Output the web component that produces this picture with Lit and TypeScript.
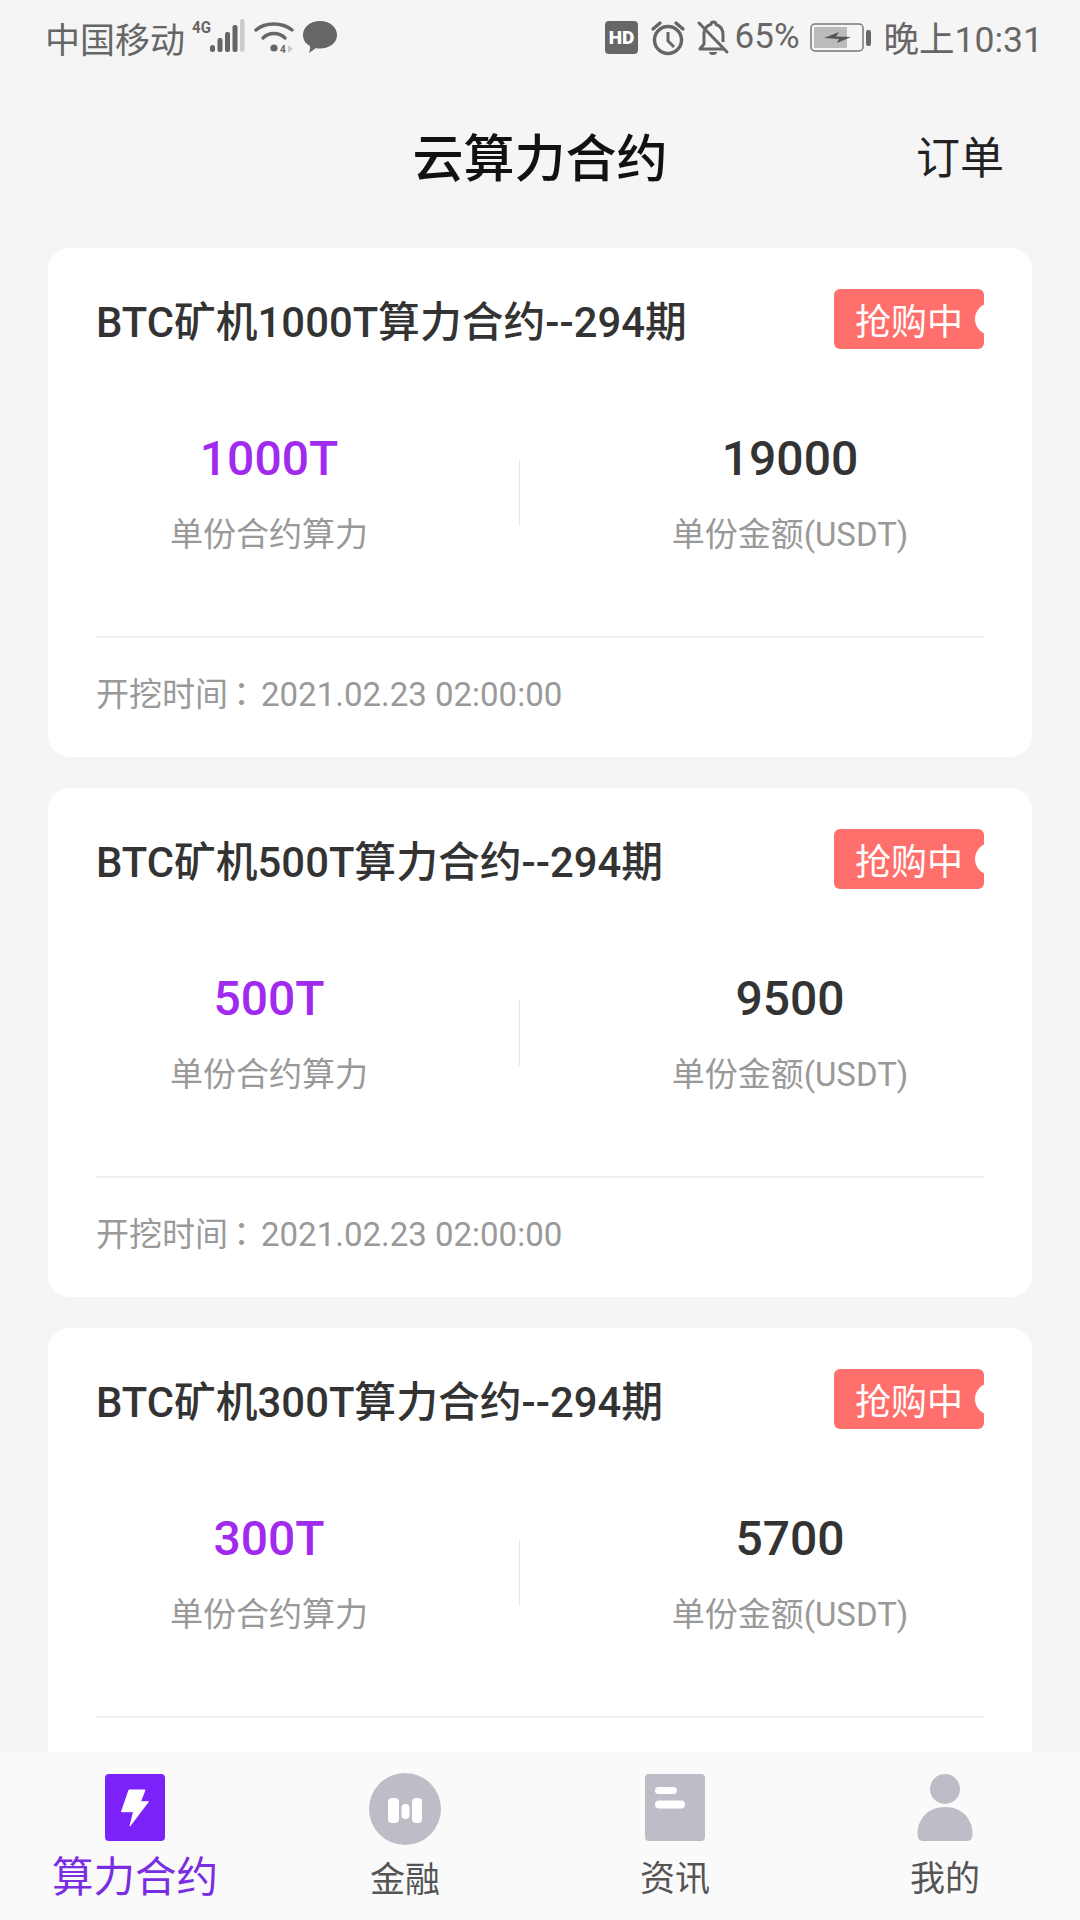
import { LitElement, html, css, nothing } from 'lit';
import { customElement, property } from 'lit/decorators.js';

const FONT = css`Roboto, "Noto Sans CJK SC", sans-serif`;

@customElement('contract-card')
class ContractCard extends LitElement {
  static styles = css`
    :host {
      display: block;
      flex-shrink: 0;
      height: 509px;
      box-sizing: border-box;
      background: #fff;
      border-radius: 22px;
      padding: 41px 48px 0;
    }
    .top {
      display: flex;
      justify-content: space-between;
      height: 60px;
    }
    .name {
      font-size: 41.800px;
      font-weight: 500;
      line-height: 68px;
      color: #333;
    }
    .badge {
      position: relative;
      overflow: hidden;
      width: 150px;
      height: 60px;
      box-sizing: border-box;
      padding-left: 21px;
      border-radius: 6px;
      background: #ff6f6b;
      color: #fff;
      font-size: 36px;
      line-height: 68px;
    }
    .badge::after {
      content: '';
      position: absolute;
      right: -23px;
      top: 14px;
      width: 32px;
      height: 32px;
      border-radius: 50%;
      background: #fff;
    }
    .stats {
      display: grid;
      grid-template-columns: 346px 1fr 388px;
      align-items: center;
      margin-top: 82px;
    }
    .stat {
      display: flex;
      flex-direction: column;
      align-items: center;
    }
    .value {
      font-size: 48px;
      font-weight: 500;
      line-height: 56px;
      color: #333;
    }
    .value.hi {
      color: #a02bee;
    }
    .label {
      margin-top: 28px;
      font-size: 33px;
      line-height: 40px;
      color: #999;
    }
    .sep {
      justify-self: center;
      width: 1px;
      height: 66px;
      background: #e6e6e6;
    }
    .line {
      height: 2px;
      margin-top: 81px;
      background: #eee;
    }
    .foot {
      margin-top: 32px;
      font-size: 33px;
      line-height: 44px;
      color: #999;
    }
    .colon {
      margin: 0 3px 0 -3px;
      font-family: "Noto Sans CJK TC", sans-serif;
    }
  `;

  @property() name = '';
  @property() power = '';
  @property() price = '';
  @property() time = '';

  render() {
    return html`
      <div class="top">
        <div class="name">${this.name}</div>
        <div class="badge">抢购中</div>
      </div>
      <div class="stats">
        <div class="stat">
          <div class="value hi">${this.power}</div>
          <div class="label">单份合约算力</div>
        </div>
        <div class="sep"></div>
        <div class="stat">
          <div class="value">${this.price}</div>
          <div class="label">单份金额(USDT)</div>
        </div>
      </div>
      <div class="line"></div>
      ${this.time
        ? html`<div class="foot">开挖时间<span class="colon">：</span>${this.time}</div>`
        : nothing}
    `;
  }
}

const bars = html`<svg width="58" height="38" viewBox="0 0 58 38">
  <text x="4" y="14" font-family="Roboto" font-size="17" font-weight="700" fill="#666" textLength="19" lengthAdjust="spacingAndGlyphs">4G</text>
  <g fill="#666">
    <rect x="22" y="26" width="5" height="7" rx="2.500"/>
    <rect x="29.500" y="19" width="5" height="14" rx="2"/>
    <rect x="37" y="13" width="5" height="20" rx="2"/>
    <rect x="44.500" y="6" width="5" height="27" rx="2"/>
  </g>
  <rect x="52" y="0" width="4.500" height="33" rx="2" fill="#ccc"/>
</svg>`;

const wifi = html`<svg width="40" height="36" viewBox="0 0 40 36">
  <path d="M2 10C11 2 28 2 38 10" fill="none" stroke="#666" stroke-width="3.400" stroke-linecap="round"/>
  <path d="M9 18C15 12 25 12 31 18" fill="none" stroke="#666" stroke-width="3.400" stroke-linecap="round"/>
  <circle cx="20" cy="28" r="3.600" fill="#666"/>
  <text x="26" y="33" font-family="Roboto" font-size="10" font-weight="700" fill="#666">4</text>
  <path d="M34 25l5 4-5 4z" fill="#ccc"/>
</svg>`;

const bubble = html`<svg width="36" height="36" viewBox="0 0 36 36">
  <path d="M18 1C27.500 1 35 7 35 15C35 23 27.500 28.500 18 28.500C16.500 28.500 15 28.400 14 28L7 33C7 33 8.500 28.500 8 26C3.500 23.500 1 20 1 15C1 7 8.500 1 18 1Z" fill="#666"/>
</svg>`;

const hd = html`<svg width="34" height="34" viewBox="0 0 34 34">
  <rect width="33" height="33" rx="4" fill="#666"/>
  <text x="16.500" y="23" text-anchor="middle" font-family="Roboto" font-size="19" font-weight="900" fill="#fff">HD</text>
</svg>`;

const alarm = html`<svg width="34" height="36" viewBox="0 0 34 36">
  <circle cx="17" cy="20" r="13.500" fill="none" stroke="#666" stroke-width="3.400"/>
  <path d="M17 12v9l6 6" fill="none" stroke="#666" stroke-width="3"/>
  <path d="M2 9L9 3M32 9L25 3" stroke="#666" stroke-width="3.400" stroke-linecap="round"/>
</svg>`;

const bellOff = html`<svg width="32" height="36" viewBox="0 0 32 36">
  <path d="M7 12C8 8 11 5 14 4.500C14 1 19 1 19 4.500C24 6 26 10 26 15V22M7 12V24L3 29H27" fill="none" stroke="#666" stroke-width="3" stroke-linejoin="round"/>
  <path d="M12 32a4 3 0 0 0 8 0z" fill="#666"/>
  <path d="M2 3L30 32" stroke="#666" stroke-width="3" stroke-linecap="round"/>
</svg>`;

const battery = html`<svg width="62" height="30" viewBox="0 0 62 30">
  <rect x="1" y="1" width="52" height="27" rx="4" fill="none" stroke="#777" stroke-width="1.500"/>
  <rect x="4" y="4" width="33" height="21" fill="#bbb"/>
  <path d="M14 15L29 9L26 13.500L41 14L27 20L29 16Z" fill="#555"/>
  <rect x="56" y="7" width="5" height="16" rx="2" fill="#666"/>
</svg>`;

@customElement('app-root')
export class AppRoot extends LitElement {
  static styles = css`
    :host {
      display: flex;
      flex-direction: column;
      width: 1080px;
      height: 1920px;
      overflow: hidden;
      background: #f5f5f5;
      font-family: ${FONT};
    }
    .status {
      display: flex;
      align-items: center;
      justify-content: space-between;
      height: 76px;
      flex-shrink: 0;
      padding: 0 37px 0 45px;
      color: #666;
      font-size: 35px;
    }
    .status div {
      display: flex;
      align-items: center;
    }
    .status svg {
      display: block;
      overflow: visible;
    }
    .carrier {
      margin-right: 3px;
      padding-bottom: 2px;
    }
    .up {
      padding-bottom: 3px;
    }
    .clock {
      font-size: 35.500px;
    }
    .gap-6 {
      margin-left: 6px;
    }
    .gap-8 {
      margin-left: 8px;
    }
    .gap-10 {
      margin-left: 10px;
    }
    .gap-12 {
      margin-left: 12px;
    }
    .header {
      position: relative;
      height: 172px;
      flex-shrink: 0;
      text-align: center;
      font-size: 51px;
      font-weight: 500;
      line-height: 168px;
      color: #111;
    }
    .header span {
      position: absolute;
      right: 76px;
      top: 0;
      font-size: 44px;
      font-weight: 400;
      line-height: 166px;
      color: #222;
    }
    .list {
      flex: 1;
      min-height: 0;
      overflow: hidden;
      display: flex;
      flex-direction: column;
      gap: 31px;
      padding: 0 48px;
    }
    .tabs {
      display: grid;
      grid-template-columns: repeat(4, 1fr);
      height: 168px;
      flex-shrink: 0;
      background: #fafafa;
    }
    .tab {
      display: flex;
      flex-direction: column;
      align-items: center;
      color: #555;
      font-size: 35px;
      line-height: 44px;
    }
    .tab svg {
      display: block;
      margin-top: 22px;
      height: 67px;
    }
    .tab svg.round {
      margin-top: 21px;
      height: 72px;
    }
    .tab.on {
      color: #7a2ee2;
      font-size: 41.500px;
    }
    .tab .txt {
      margin-top: 14px;
    }
    .tab.on .txt {
      margin-top: 15px;
    }
    .tab .txt.sm {
      margin-top: 17px;
    }
  `;

  render() {
    return html`
      <div class="status">
        <div>
          <span class="carrier">中国移动</span>
          ${bars}
          <span class="gap-8">${wifi}</span>
          <span class="gap-8">${bubble}</span>
        </div>
        <div>
          ${hd}
          <span class="gap-12">${alarm}</span>
          <span class="gap-12">${bellOff}</span>
          <span class="gap-6 up">65%</span>
          <span class="gap-10">${battery}</span>
          <span class="gap-12 up clock">晚上10:31</span>
        </div>
      </div>
      <div class="header">云算力合约<span>订单</span></div>
      <div class="list">
        <contract-card name="BTC矿机1000T算力合约--294期" power="1000T" price="19000" time="2021.02.23 02:00:00"></contract-card>
        <contract-card name="BTC矿机500T算力合约--294期" power="500T" price="9500" time="2021.02.23 02:00:00"></contract-card>
        <contract-card name="BTC矿机300T算力合约--294期" power="300T" price="5700"></contract-card>
      </div>
      <div class="tabs">
        <div class="tab on">
          <svg width="60" viewBox="0 0 60 67">
            <rect width="60" height="67" rx="4" fill="#7b22fb"/>
            <path d="M24 16H40L35.500 27.700H43.400L25 52L28.600 37.700H16.500Z" fill="#fff" stroke="#fff" stroke-width="1" stroke-linejoin="round"/>
          </svg>
          <div class="txt">算力合约</div>
        </div>
        <div class="tab">
          <svg class="round" width="72" viewBox="0 0 72 72">
            <circle cx="36" cy="36" r="36" fill="#bdbdc7"/>
            <g fill="#fff">
              <rect x="19" y="25" width="11" height="25" rx="4"/>
              <rect x="32.500" y="31" width="8" height="15" rx="4"/>
              <rect x="43" y="25" width="10" height="25" rx="4"/>
            </g>
          </svg>
          <div class="txt">金融</div>
        </div>
        <div class="tab">
          <svg width="60" viewBox="0 0 60 67">
            <rect width="60" height="67" rx="4" fill="#bdbdc7"/>
            <rect x="10" y="13" width="22" height="7" rx="3.500" fill="#fff"/>
            <rect x="10" y="26.500" width="30" height="8" rx="4" fill="#fff"/>
          </svg>
          <div class="txt sm">资讯</div>
        </div>
        <div class="tab">
          <svg width="56" viewBox="0 0 56 67">
            <circle cx="28" cy="15" r="15" fill="#bdbdc7"/>
            <path d="M0.500 60C0.500 44 12 33 28 33C44 33 55.500 44 55.500 60C55.500 65 53 67 50 67H6C3 67 0.500 65 0.500 60Z" fill="#bdbdc7"/>
          </svg>
          <div class="txt sm">我的</div>
        </div>
      </div>
    `;
  }
}
